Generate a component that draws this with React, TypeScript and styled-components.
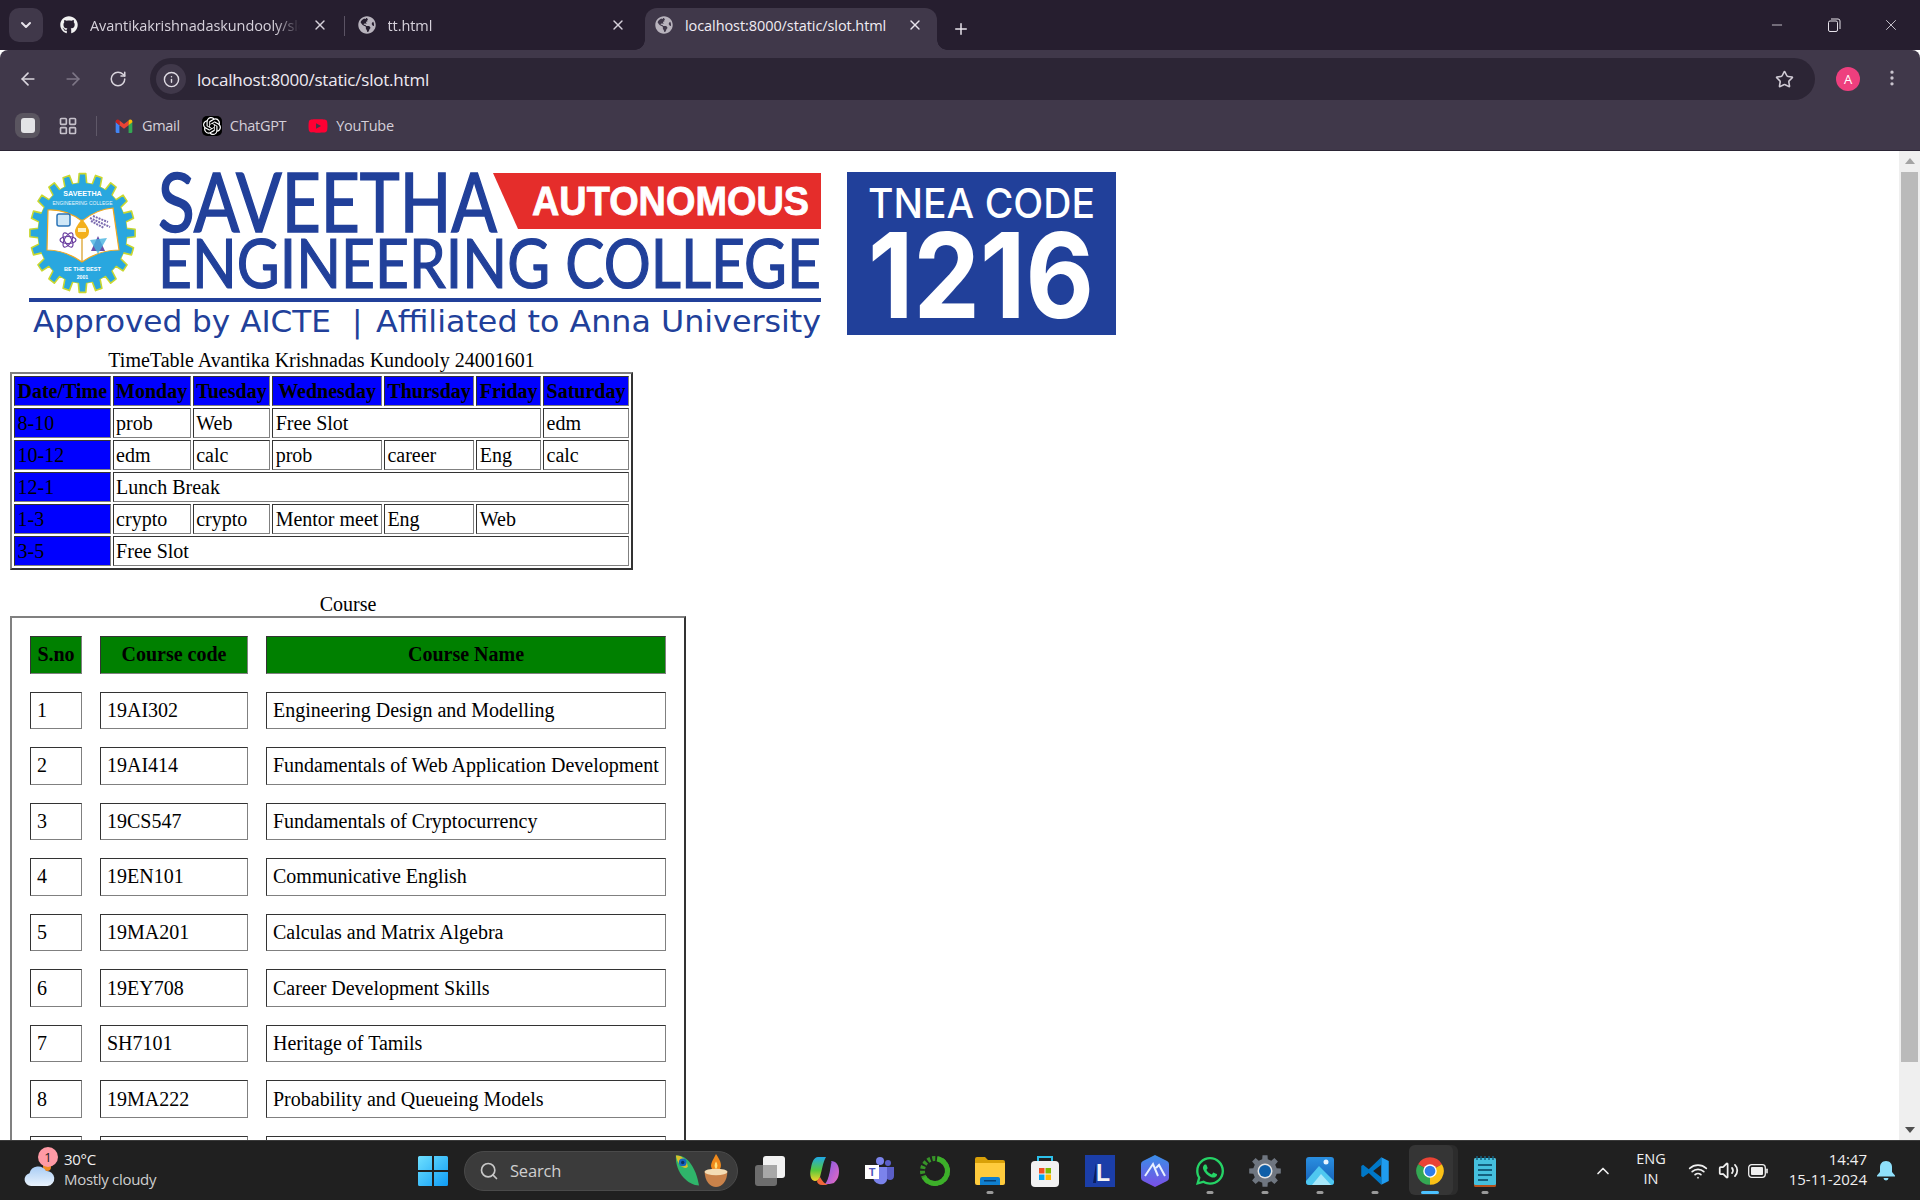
import React from "react";
import styled, {createGlobalStyle} from "styled-components";
import {ArrowLeft, ArrowRight, RotateCw, Info, Star, EllipsisVertical, Plus, X, ChevronDown, ChevronUp, Minus, LayoutGrid, Search as SearchIcon, Wifi, Volume2} from "lucide-react";
import {FaGithub, FaGlobeAmericas, FaWhatsapp, FaYoutube} from "react-icons/fa";
import {SiOpenai} from "react-icons/si";

const UI_FONT = `"Open Sans", "Noto Sans", Roboto, sans-serif`;

const GlobalStyle = createGlobalStyle`
    html, body {
        margin: 0;
        padding: 0;
        height: 1200px;
        overflow: hidden;
        background: #fff;
    }
`;

const Screen = styled.div`
    width: 1920px;
    height: 1200px;
    display: flex;
    flex-direction: column;
    overflow: hidden;
`;

/* browser chrome */
const TabStrip = styled.div`
    height: 50px;
    flex: none;
    display: flex;
    align-items: flex-end;
    padding-left: 9px;
    background: #261e2f;
    color: #e8e4ec;
    font-family: ${UI_FONT};
`;

const TabSearch = styled.div`
    width: 34px;
    height: 34px;
    margin: 0 7px 8px 0;
    border-radius: 10px;
    background: #40384a;
    display: flex;
    align-items: center;
    justify-content: center;
`;

const Tab = styled.div<{$active?: boolean; $sep?: boolean}>`
    position: relative;
    width: ${p => p.$active ? 292 : 297.5}px;
    height: 42px;
    flex: none;
    box-sizing: border-box;
    padding: 0 ${p => p.$active ? 14 : 19.5}px 8px 10px;
    display: flex;
    align-items: center;
    gap: 12px;
    border-radius: 12px 12px 0 0;
    background: ${p => p.$active ? "#40384a" : "transparent"};
    ${p => p.$sep ? `&::after {
        content: "";
        position: absolute;
        right: 3px;
        top: 8px;
        width: 1px;
        height: 20px;
        background: #5b5364;
    }` : ""}
    ${p => p.$active ? `&::before, &::after {
        content: "";
        position: absolute;
        bottom: 0;
        width: 10px;
        height: 10px;
    }
    &::before {
        left: -10px;
        background: radial-gradient(circle at 0 0, transparent 9.5px, #40384a 10px);
    }
    &::after {
        right: -10px;
        background: radial-gradient(circle at 100% 0, transparent 9.5px, #40384a 10px);
    }` : ""}
`;

const TabTitle = styled.div<{$active?: boolean}>`
    flex: 1;
    min-width: 0;
    white-space: nowrap;
    overflow: hidden;
    font-size: 14.5px;
    letter-spacing: -0.08px;
    color: ${p => p.$active ? "#f0ecf3" : "#d6d1db"};
    ${p => p.$active ? "" : "mask-image: linear-gradient(to right, #000 88%, transparent 100%);"}
`;

const TabIcon = styled.div`
    width: 18px;
    height: 18px;
    flex: none;
    display: flex;
    color: #b8b3bd;
`;

const NewTab = styled.div`
    margin: 0 0 12px 15px;
    display: flex;
`;

const WindowControls = styled.div`
    margin-left: auto;
    align-self: flex-start;
    height: 50px;
    padding-right: 1px;
    display: flex;
    align-items: center;
    color: #e6e2ea;
`;

const WindowButton = styled.div`
    width: 57px;
    display: flex;
    justify-content: center;
`;

const Toolbar = styled.div`
    height: 58px;
    flex: none;
    box-sizing: border-box;
    display: flex;
    align-items: flex-start;
    padding-top: 8px;
    background: #40384a;
    border-radius: 8px 8px 0 0;
    font-family: ${UI_FONT};
`;

const NavButton = styled.div<{$dim?: boolean}>`
    width: 45px;
    height: 42px;
    flex: none;
    display: flex;
    align-items: center;
    justify-content: center;
    color: ${p => p.$dim ? "#7d7686" : "#d9d5dd"};
`;

const NavGroup = styled.div`
    width: 150px;
    flex: none;
    box-sizing: border-box;
    padding-left: 5px;
    display: flex;
`;

const Omnibox = styled.div`
    width: 1665px;
    height: 42px;
    flex: none;
    box-sizing: border-box;
    padding: 0 21px 0 6px;
    border-radius: 21px;
    background: #2c2535;
    display: flex;
    align-items: center;
`;

const SiteInfo = styled.div`
    width: 30px;
    height: 30px;
    border-radius: 50%;
    background: #40384a;
    color: #e0dce4;
    display: flex;
    align-items: center;
    justify-content: center;
    flex: none;
`;

const Address = styled.div`
    margin-left: 11px;
    flex: 1;
    font-size: 17px;
    letter-spacing: -0.22px;
    color: #efebf2;
`;

const Avatar = styled.div`
    width: 24px;
    height: 24px;
    margin: 9px 0 0 21px;
    border-radius: 50%;
    background: #ee3f7e;
    color: #fff;
    font-size: 13px;
    display: flex;
    align-items: center;
    justify-content: center;
    flex: none;
`;

const MenuButton = styled.div`
    margin: 10px 0 0 22px;
    color: #c9c4ce;
    display: flex;
`;

const BookmarkBar = styled.div`
    height: 43px;
    flex: none;
    box-sizing: border-box;
    padding: 0 0 7px 15px;
    display: flex;
    align-items: center;
    background: #40384a;
    border-bottom: 1px solid #2b2535;
    font-family: ${UI_FONT};
`;

const GroupButton = styled.div`
    width: 25px;
    height: 25px;
    border-radius: 8px;
    background: #5a5560;
    display: flex;
    align-items: center;
    justify-content: center;
`;

const GroupSquare = styled.div`
    width: 14px;
    height: 15px;
    border-radius: 3px;
    background: #e3e3e6;
`;

const AppsButton = styled.div`
    margin-left: 18px;
    display: flex;
    color: #c6c1cb;
`;

const BarDivider = styled.div`
    width: 1px;
    height: 20px;
    margin: 0 17px 0 18px;
    background: #5f5868;
`;

const Bookmark = styled.div`
    display: flex;
    align-items: center;
    gap: 8px;
    margin-right: 22px;
    font-size: 14.5px;
    letter-spacing: -0.3px;
    color: #d5d0d9;
`;

const ChatGptMark = styled(SiOpenai)`
    box-sizing: border-box;
    width: 20px;
    height: 20px;
    padding: 1px;
    border-radius: 5px;
    background: #000;
    color: #fff;
`;

/* page */
const Viewport = styled.div`
    flex: 1;
    min-height: 0;
    display: flex;
    background: #fff;
`;

const Page = styled.div`
    flex: 1;
    min-width: 0;
    overflow: hidden;
    box-sizing: border-box;
    padding: 8px;
    font-family: "Liberation Serif", "Times New Roman", serif;
    font-size: 20px;
    color: #000;
`;

const Banner = styled.div`
    height: 190px;
    display: flex;
    align-items: flex-start;
`;

const LogoArt = styled.svg`
    width: 822px;
    height: 186px;
    flex: none;
`;

const CodeArt = styled.svg`
    width: 270px;
    height: 164px;
    margin: 13px 0 0 17px;
    flex: none;
`;

const SlotTable = styled.table`
    margin: 0 0 23px 2px;
    border-collapse: separate;
    border-spacing: 2px;
    border-width: 2px;
    border-style: solid;
    border-color: #808080 #333 #333 #808080;
`;

const SlotCell = styled.td<{$time?: boolean}>`
    padding: 2.5px;
    border-width: 1px;
    border-style: solid;
    border-color: #333 #808080 #808080 #333;
    white-space: nowrap;
    background: ${p => p.$time ? "#0000ff" : "transparent"};
`;

const SlotHead = styled.th`
    padding: 2.5px;
    border-width: 1px;
    border-style: solid;
    border-color: #333 #808080 #808080 #333;
    white-space: nowrap;
    background: #0000ff;
`;

const CourseTable = styled.table`
    margin-left: 2px;
    border-collapse: separate;
    border-spacing: 18px;
    border-width: 2px;
    border-style: solid;
    border-color: #808080 #333 #333 #808080;
`;

const CourseRow = styled.tr`
    height: 37.56px;
`;

const CourseCell = styled.td`
    padding: 6px;
    border-width: 1px;
    border-style: solid;
    border-color: #333 #808080 #808080 #333;
    white-space: nowrap;
`;

const CourseHead = styled.th<{$w: number}>`
    width: ${p => p.$w}px;
    padding: 6px;
    border-width: 1px;
    border-style: solid;
    border-color: #333 #808080 #808080 #333;
    white-space: nowrap;
    background: #008000;
`;

const Scrollbar = styled.div`
    width: 21px;
    flex: none;
    display: flex;
    flex-direction: column;
    background: #efefef;
`;

const ScrollArrow = styled.div`
    height: 20px;
    flex: none;
    display: flex;
    align-items: center;
    justify-content: center;
`;

const ScrollTrack = styled.div`
    flex: 1;
    min-height: 0;
    padding-top: 1px;
`;

const ScrollThumb = styled.div`
    height: 890px;
    margin: 0 2px;
    background: #bababa;
`;

/* taskbar */
const Taskbar = styled.div`
    height: 60px;
    flex: none;
    box-sizing: border-box;
    display: flex;
    align-items: center;
    background: #202020;
    border-top: 1px solid #3a3a3a;
    color: #f0f0f0;
    font-family: ${UI_FONT};
`;

const Weather = styled.div`
    width: 405px;
    flex: none;
    box-sizing: border-box;
    padding-left: 23px;
    display: flex;
    align-items: center;
`;

const WeatherGlyph = styled.div`
    position: relative;
    width: 41px;
    height: 50px;
    flex: none;
    box-sizing: border-box;
    padding-bottom: 7px;
    display: flex;
    align-items: flex-end;
`;

const WeatherBadge = styled.div`
    position: absolute;
    left: 15px;
    top: 1px;
    width: 20px;
    height: 20px;
    border-radius: 50%;
    background: #ff9aa5;
    color: #222;
    font-size: 13px;
    display: flex;
    align-items: center;
    justify-content: center;
`;

const WeatherText = styled.div`
    margin-bottom: 4px;
    font-size: 15px;
    line-height: 20px;
    letter-spacing: -0.3px;
`;

const WeatherSub = styled.div`
    color: #cfcfcf;
`;

const TaskSlot = styled.div<{$dot?: boolean; $current?: boolean}>`
    position: relative;
    width: 55px;
    height: 59px;
    flex: none;
    display: flex;
    align-items: center;
    justify-content: center;
    ${p => p.$current ? `&::before {
        content: "";
        position: absolute;
        left: 7px;
        top: 4px;
        width: 44px;
        height: 50px;
        border-radius: 6px;
        background: #353535;
        box-shadow: 5px 0 0 #2c2c2c;
    }` : ""}
    ${p => (p.$dot || p.$current) ? `&::after {
        content: "";
        position: absolute;
        bottom: 6px;
        left: 50%;
        transform: translateX(-50%);
        width: ${p.$current ? 18 : 7}px;
        height: 3px;
        border-radius: 2px;
        background: ${p.$current ? "#4cc2ff" : "#9a9a9a"};
    }` : ""}
    & > svg {
        position: relative;
        z-index: 1;
    }
`;

const SearchPill = styled.div`
    width: 274px;
    height: 40px;
    margin: 0 4px 0 4px;
    flex: none;
    box-sizing: border-box;
    padding: 0 8px 0 14px;
    border-radius: 20px;
    background: #3b3b3b;
    border: 1px solid #4a4a4a;
    display: flex;
    align-items: center;
    color: #c8c8c8;
`;

const SearchLabel = styled.div`
    margin-left: 11px;
    flex: 1;
    font-size: 16.5px;
    letter-spacing: -0.2px;
    color: #cfcfcf;
`;

const Tray = styled.div`
    margin-left: auto;
    padding-right: 15px;
    display: flex;
    align-items: center;
`;

const TraySlot = styled.div<{$w: number}>`
    width: ${p => p.$w}px;
    flex: none;
    display: flex;
    justify-content: center;
`;

const Lang = styled.div`
    width: 56px;
    flex: none;
    margin-bottom: 3px;
    text-align: center;
    font-size: 14.5px;
    line-height: 20px;
`;

const Clock = styled.div`
    width: 94px;
    flex: none;
    margin-bottom: 3px;
    text-align: right;
    font-size: 15px;
    line-height: 20px;
    letter-spacing: 0;
`;

/* drawings */
function gearPath(cx: number, cy: number, outer: number, inner: number, teeth: number, sx = 1) {
    let d = "";
    for (let i = 0; i < teeth; i++) {
        const step = (Math.PI * 2) / teeth;
        const a = i * step - Math.PI / 2;
        const pts: Array<[number, number]> = [
            [inner, a - step * 0.3],
            [outer, a - step * 0.2],
            [outer, a + step * 0.2],
            [inner, a + step * 0.3],
        ];
        pts.forEach(([r, t], k) => {
            const x = (cx + sx * r * Math.cos(t)).toFixed(1);
            const y = (cy + r * Math.sin(t)).toFixed(1);
            d += (i === 0 && k === 0 ? "M" : "L") + x + " " + y + " ";
        });
    }
    return d + "Z";
}

function Emblem() {
    return (
        <g>
            <path d={gearPath(82.5, 233, 59.5, 50, 20, 0.885)} fill="#29a7df" stroke="#c9d72f" strokeWidth="1.6" strokeLinejoin="round" />
            <ellipse cx="82.5" cy="233" rx="44.5" ry="50" fill="#29a7df" />
            <path d="M48 210 Q66 209 82 221 Q97 209 113 208 L119 250 Q99 250 82 262 Q65 250 47 250 Z" fill="#fff" stroke="#f3a81c" strokeWidth="1.2" />
            <rect x="57" y="214" width="13" height="12" rx="2" fill="#cfe7f7" stroke="#2b74b8" strokeWidth="1.5" />
            <path d="M90 218 L110 227 M93 216 L108 222 M91 221 L104 228" stroke="#7b6bb0" strokeWidth="2" strokeDasharray="2 1" />
            <g fill="none" stroke="#6b3fa0" strokeWidth="1.2">
                <ellipse cx="68" cy="240" rx="8" ry="3.500" transform="rotate(60 68 240)" />
                <ellipse cx="68" cy="240" rx="8" ry="3.500" transform="rotate(-60 68 240)" />
                <ellipse cx="68" cy="240" rx="8" ry="3.500" />
            </g>
            <path d="M98 236 L105 251 L91 251 Z" fill="#6b4fa8" />
            <path d="M90 240 L107 238 L98 254 Z" fill="#45b3e0" opacity=".8" />
            <line x1="82" y1="236" x2="82" y2="261" stroke="#d99a1a" strokeWidth="1.2" />
            <path d="M82 219 Q90 229 89 232 A7 7 0 0 1 75 232 Q74 229 82 219Z" fill="#f3b01c" />
            <rect x="78" y="228" width="8" height="4" fill="#fff3c4" />
            <text x="82.5" y="196" textAnchor="middle" fontFamily="Liberation Sans, sans-serif" fontWeight="700" fontSize="7.2" fill="#fff">SAVEETHA</text>
            <text x="82.5" y="205" textAnchor="middle" fontFamily="Liberation Sans, sans-serif" fontSize="6" fill="#e8f6fc" textLength="60" lengthAdjust="spacingAndGlyphs">ENGINEERING COLLEGE</text>
            <text x="82.5" y="271" textAnchor="middle" fontFamily="Liberation Sans, sans-serif" fontWeight="700" fontSize="5.6" fill="#fff">BE THE BEST</text>
            <text x="82.5" y="279" textAnchor="middle" fontFamily="Liberation Sans, sans-serif" fontWeight="700" fontSize="5.2" fill="#fff">2001</text>
        </g>
    );
}

function Logo() {
    return (
        <LogoArt viewBox="8 159 822 186">
            <Emblem />
            <text x="158" y="232" fontFamily="Lato, sans-serif" fontSize="81" fill="#21409a" stroke="#21409a" strokeWidth="1.6" textLength="339" lengthAdjust="spacingAndGlyphs">SAVEETHA</text>
            <path d="M493 173 H821 V229 H518 Z" fill="#e52d2b" />
            <text x="532" y="215" fontFamily="Liberation Sans, sans-serif" fontWeight="700" fontSize="40" fill="#fff" stroke="#fff" strokeWidth=".8" textLength="277" lengthAdjust="spacingAndGlyphs">AUTONOMOUS</text>
            <text x="158" y="288" fontFamily="Lato, sans-serif" fontSize="67" fill="#21409a" stroke="#21409a" strokeWidth="1.2" textLength="663" lengthAdjust="spacingAndGlyphs">ENGINEERING COLLEGE</text>
            <rect x="29" y="298" width="792" height="4" fill="#21409a" />
            <text x="33" y="332" fontFamily="DejaVu Sans, sans-serif" fontSize="31" fill="#21409a" textLength="298" lengthAdjust="spacingAndGlyphs">Approved by AICTE</text>
            <text x="352" y="332" fontFamily="DejaVu Sans, sans-serif" fontSize="31" fill="#21409a">|</text>
            <text x="376" y="332" fontFamily="DejaVu Sans, sans-serif" fontSize="31" fill="#21409a" textLength="445" lengthAdjust="spacingAndGlyphs">Affiliated to Anna University</text>
        </LogoArt>
    );
}

function TneaCode() {
    return (
        <CodeArt viewBox="847 172 270 164">
            <rect x="847" y="172" width="269" height="163" fill="#21409a" />
            <text x="868" y="218" fontFamily="Inter, sans-serif" fontWeight="500" fontSize="41" fill="#fff" textLength="227" lengthAdjust="spacingAndGlyphs">TNEA CODE</text>
            <text x="868" y="318" fontFamily="Inter, sans-serif" fontWeight="700" fontSize="118" fill="#fff" textLength="226" lengthAdjust="spacingAndGlyphs">1216</text>
        </CodeArt>
    );
}

function GmailIcon() {
    return (
        <svg width="20" height="20" viewBox="0 0 24 24">
            <path d="M2 6.5V19a1.5 1.5 0 0 0 1.500 1.500H6.500V11z" fill="#4285f4" />
            <path d="M22 6.500V19a1.500 1.500 0 0 1-1.500 1.500H17.500V11z" fill="#34a853" />
            <path d="M6.500 11V5.500L12 9.700l5.500-4.200V11L12 15.200z" fill="#ea4335" />
            <path d="M2 6.500C2 4.500 4.300 3.500 5.800 4.700L6.500 5.500V11L2 7.500z" fill="#c5221f" />
            <path d="M22 6.500C22 4.500 19.700 3.500 18.200 4.700L17.500 5.500V11L22 7.500z" fill="#fbbc04" />
        </svg>
    );
}

function CloudIcon() {
    return (
        <svg width="32" height="30" viewBox="0 0 32 30">
            <defs>
                <linearGradient id="cloudFill" x1="0" y1="0" x2="0" y2="1">
                    <stop offset="0" stopColor="#a9cdf5" />
                    <stop offset="1" stopColor="#e9f2fc" />
                </linearGradient>
            </defs>
            <circle cx="24" cy="8" r="4" fill="#f08a24" />
            <path d="M8 27a6.500 6.500 0 0 1-1.500-12.800A9 9 0 0 1 23 12a7.500 7.500 0 0 1 1.500 15z" fill="url(#cloudFill)" />
        </svg>
    );
}

function WindowsIcon() {
    return (
        <svg width="30" height="30" viewBox="0 0 30 30">
            <defs>
                <linearGradient id="winFill" x1="0" y1="0" x2="1" y2="1">
                    <stop offset="0" stopColor="#6ee0ff" />
                    <stop offset="1" stopColor="#0f9cf5" />
                </linearGradient>
            </defs>
            <path d="M0 1.500A1.500 1.500 0 0 1 1.500 0H14V14H0zM16 0H28.500A1.500 1.500 0 0 1 30 1.500V14H16zM0 16H14V30H1.500A1.500 1.500 0 0 1 0 28.500zM16 16H30V28.500A1.500 1.500 0 0 1 28.500 30H16z" fill="url(#winFill)" />
        </svg>
    );
}

function FeatherIcon() {
    return (
        <svg width="32" height="36" viewBox="0 0 32 42">
            <path d="M3 3C14 1 26 14 30 38C18 38 2 24 3 3Z" fill="#2fb56a" />
            <path d="M3 3C9 2 16 8 17 16C13 20 5 15 3 3Z" fill="#d9c02a" />
            <circle cx="11" cy="11" r="4.500" fill="#1664c0" />
            <circle cx="11" cy="11" r="2" fill="#0b2f66" />
        </svg>
    );
}

function DiyaIcon() {
    return (
        <svg width="26" height="36" viewBox="0 0 26 38">
            <path d="M13 1C17 7 19 11 18 15C17 20 9 20 8 15C7 11 10 7 13 1Z" fill="#f08a1c" />
            <path d="M13 9C15 12 15 15 13 17C11 15 11 12 13 9Z" fill="#ffe27a" />
            <path d="M1 19H25C25 30 19 36 13 36C7 36 1 30 1 19Z" fill="#c9824a" />
            <ellipse cx="13" cy="20" rx="12" ry="3.500" fill="#f4dcb4" />
        </svg>
    );
}

function TaskViewIcon() {
    return (
        <svg width="30" height="30" viewBox="0 0 30 30">
            <rect x="0" y="9" width="22" height="21" rx="3" fill="#6d6d6d" />
            <rect x="8" y="0" width="22" height="22" rx="3" fill="#f2f2f2" />
            <rect x="8" y="9" width="14" height="13" fill="#a8a8a8" />
        </svg>
    );
}

function CopilotIcon() {
    return (
        <svg width="30" height="30" viewBox="0 0 30 30">
            <defs>
                <linearGradient id="copA" x1="0" y1="0" x2="0" y2="1">
                    <stop offset="0" stopColor="#1fa8e6" />
                    <stop offset=".55" stopColor="#57c83c" />
                    <stop offset="1" stopColor="#f6d32b" />
                </linearGradient>
                <linearGradient id="copB" x1="0" y1="0" x2="1" y2="1">
                    <stop offset="0" stopColor="#7c5ae8" />
                    <stop offset="1" stopColor="#ea6ac0" />
                </linearGradient>
            </defs>
            <path d="M8 1H16C13 6 12 14 10 21C9 24 7 25 5 25C1 25-1 19 1 12C2 6 4 1 8 1Z" fill="url(#copA)" />
            <path d="M21 5C26 5 29 9 29 15C29 21 27 24 24 27C22 28 17 28 15 28C19 24 21 10 21 5Z" fill="url(#copB)" />
            <path d="M10 21C12 25 15 28 18 29H12C9 29 7 27 7 25Z" fill="#f0663a" />
            <path d="M14 7C17 4 20 4 22 6C20 10 19 18 18 21H12C13 16 13 11 14 7Z" fill="#202020" opacity=".55" />
        </svg>
    );
}

function TeamsIcon() {
    return (
        <svg width="30" height="28" viewBox="0 0 30 28">
            <circle cx="23" cy="6" r="3" fill="#5b5fc7" />
            <circle cx="15" cy="4" r="4" fill="#7b83eb" />
            <path d="M20 10H29V19C29 23 25 24 22 22Z" fill="#5b5fc7" />
            <path d="M8 10H22V22C22 26 18 28 14 27C10 26 8 23 8 19Z" fill="#7b83eb" />
            <rect x="0" y="8" width="14" height="14" fill="#fff" />
            <text x="7" y="19" textAnchor="middle" fontFamily="Liberation Sans, sans-serif" fontWeight="700" fontSize="11" fill="#4b53bc">T</text>
        </svg>
    );
}

function RingIcon() {
    return (
        <svg width="32" height="32" viewBox="0 0 32 32">
            <circle cx="16" cy="16" r="12.500" fill="none" stroke="#3db02a" strokeWidth="5" strokeDasharray="50 30" transform="rotate(-80 16 16)" />
            <circle cx="16" cy="16" r="12.500" fill="none" stroke="#3db02a" strokeWidth="5" strokeDasharray="3 2" strokeDashoffset="0" transform="rotate(100 16 16)" pathLength="80" opacity=".8" />
        </svg>
    );
}

function FolderIcon() {
    return (
        <svg width="30" height="28" viewBox="0 0 30 28">
            <path d="M0 2A2 2 0 0 1 2 0H10L13 3H28A2 2 0 0 1 30 5V10H0Z" fill="#d9a008" />
            <path d="M0 6H30V26A2 2 0 0 1 28 28H2A2 2 0 0 1 0 26Z" fill="#ffcb3d" />
            <path d="M5 22A2 2 0 0 1 7 20H23A2 2 0 0 1 25 22V28H5Z" fill="#0f7fd0" />
            <rect x="9" y="23" width="12" height="1.500" fill="#063f73" />
        </svg>
    );
}

function StoreIcon() {
    return (
        <svg width="30" height="32" viewBox="0 0 30 32">
            <path d="M8 7V2H22V7" fill="none" stroke="#2cc0ea" strokeWidth="2" />
            <rect x="1" y="6" width="28" height="26" rx="4" fill="#f2f2f2" />
            <rect x="9" y="13" width="5.500" height="5.500" fill="#f25022" />
            <rect x="15.500" y="13" width="5.500" height="5.500" fill="#7fba00" />
            <rect x="9" y="19.500" width="5.500" height="5.500" fill="#00a4ef" />
            <rect x="15.500" y="19.500" width="5.500" height="5.500" fill="#ffb900" />
        </svg>
    );
}

function LetterIcon() {
    return (
        <svg width="30" height="32" viewBox="0 0 30 32">
            <rect width="30" height="32" fill="#1b3ea8" />
            <path d="M11 8L8 28H11Z" fill="#0b1f5c" />
            <text x="11" y="26" fontFamily="Liberation Sans, sans-serif" fontWeight="700" fontSize="23" fill="#f4f4f4">L</text>
        </svg>
    );
}

function HexIcon() {
    return (
        <svg width="28" height="32" viewBox="0 0 28 32">
            <defs>
                <linearGradient id="hexFill" x1="0" y1="0" x2="0" y2="1">
                    <stop offset="0" stopColor="#3a8ee8" />
                    <stop offset="1" stopColor="#7a4fe6" />
                </linearGradient>
            </defs>
            <path d="M14 0L26 6Q28 7 28 9V23Q28 25 26 26L14 32L2 26Q0 25 0 23V9Q0 7 2 6Z" fill="url(#hexFill)" />
            <path d="M4 21L12 9L17 21M15 13L18 10L24 21" fill="none" stroke="#e8f0ff" strokeWidth="2" />
        </svg>
    );
}

function SettingsIcon() {
    return (
        <svg width="32" height="32" viewBox="0 0 32 32">
            <path d={gearPath(16, 16, 16, 12, 8)} fill="#6f7680" />
            <circle cx="16" cy="16" r="9.500" fill="#6f7680" />
            <circle cx="16" cy="16" r="7.500" fill="#e4e4e4" />
            <circle cx="16" cy="16" r="6" fill="#0f5fa8" />
        </svg>
    );
}

function PhotosIcon() {
    return (
        <svg width="28" height="28" viewBox="0 0 28 28">
            <defs>
                <linearGradient id="photoFill" x1="0" y1="0" x2="0" y2="1">
                    <stop offset="0" stopColor="#2a8fe0" />
                    <stop offset="1" stopColor="#1560b8" />
                </linearGradient>
            </defs>
            <rect width="28" height="28" rx="3" fill="url(#photoFill)" />
            <circle cx="20" cy="5" r="2.500" fill="#e8f4ff" />
            <path d="M0 24L13 9L28 24V25A3 3 0 0 1 25 28H3A3 3 0 0 1 0 25Z" fill="#4fc8f0" />
            <path d="M6 28L15 17L25 28Z" fill="#a8e8fa" />
        </svg>
    );
}

function CodeIcon() {
    return (
        <svg width="30" height="30" viewBox="0 0 24 24">
            <path d="M17 1L23 4V20L17 23Z" fill="#1f9cf0" />
            <path d="M17 1L7 10.500L2.500 7L1 8V16L2.500 17L7 13.500L17 23V17L10.500 12L17 7Z" fill="#0078c8" />
        </svg>
    );
}

function ChromeIcon() {
    return (
        <svg width="30" height="30" viewBox="0 0 24 24">
            <path d="M12 12L2.470 6.500A11 11 0 0 1 21.530 6.500Z" fill="#ea4335" />
            <path d="M12 12L21.530 6.500A11 11 0 0 1 12 23Z" fill="#fbc116" />
            <path d="M12 12L12 23A11 11 0 0 1 2.470 6.500Z" fill="#34a853" />
            <circle cx="12" cy="12" r="5.400" fill="#fff" />
            <circle cx="12" cy="12" r="4.300" fill="#2f7de9" />
        </svg>
    );
}

function NotepadIcon() {
    return (
        <svg width="24" height="32" viewBox="0 0 24 32">
            <rect x="1" y="3" width="22" height="29" rx="1.500" fill="#b5511c" />
            <rect x="1" y="3" width="22" height="27" rx="1.500" fill="#45c0de" />
            <path d="M5 10H19M5 15H19M5 20H19M5 25H15" stroke="#14607f" strokeWidth="2" />
            <path d="M4 1V5M8 1V5M12 1V5M16 1V5M20 1V5" stroke="#14607f" strokeWidth="1.500" />
        </svg>
    );
}

function BatteryIcon() {
    return (
        <svg width="20" height="14" viewBox="0 0 20 14">
            <rect x=".7" y=".7" width="16.600" height="12.600" rx="3" fill="none" stroke="#f0f0f0" strokeWidth="1.300" />
            <rect x="3" y="3" width="12" height="8" rx="1" fill="#f0f0f0" />
            <rect x="18.200" y="4.500" width="1.600" height="5" rx=".8" fill="#f0f0f0" />
        </svg>
    );
}

function BellIcon() {
    return (
        <svg width="18" height="20" viewBox="0 0 18 20">
            <path d="M9 0C5 0 3 3 3 6V11L0 14.500V15.500H18V14.500L15 11V6C15 3 13 0 9 0Z" fill="#8fe0fb" />
            <path d="M6.500 17H11.500A2.500 2.500 0 0 1 6.500 17Z" fill="#8fe0fb" />
        </svg>
    );
}

function RestoreIcon() {
    return (
        <svg width="14" height="14" viewBox="0 0 14 14" fill="none" stroke="currentColor" strokeWidth="1">
            <rect x="1.500" y="3" width="9" height="10.500" rx="1.500" />
            <path d="M4 1H11A2 2 0 0 1 13 3V11" />
        </svg>
    );
}

const DAYS = ["Date/Time", "Monday", "Tuesday", "Wednesday", "Thursday", "Friday", "Saturday"];

const SLOTS: Array<{time: string; cells: Array<[string, number]>}> = [
    {time: "8-10", cells: [["prob", 1], ["Web", 1], ["Free Slot", 3], ["edm", 1]]},
    {time: "10-12", cells: [["edm", 1], ["calc", 1], ["prob", 1], ["career", 1], ["Eng", 1], ["calc", 1]]},
    {time: "12-1", cells: [["Lunch Break", 6]]},
    {time: "1-3", cells: [["crypto", 1], ["crypto", 1], ["Mentor meet", 1], ["Eng", 1], ["Web", 2]]},
    {time: "3-5", cells: [["Free Slot", 6]]},
];

const COURSES = [
    ["1", "19AI302", "Engineering Design and Modelling"],
    ["2", "19AI414", "Fundamentals of Web Application Development"],
    ["3", "19CS547", "Fundamentals of Cryptocurrency"],
    ["4", "19EN101", "Communicative English"],
    ["5", "19MA201", "Calculas and Matrix Algebra"],
    ["6", "19EY708", "Career Development Skills"],
    ["7", "SH7101", "Heritage of Tamils"],
    ["8", "19MA222", "Probability and Queueing Models"],
    ["\u00a0", "", ""],
];

export default function App() {
    return (
        <Screen>
            <GlobalStyle />
            <TabStrip>
                <TabSearch><ChevronDown size={16} strokeWidth={3} color="#e8e4ec" /></TabSearch>
                <Tab $sep>
                    <TabIcon><FaGithub size={18} color="#f2f2f2" /></TabIcon>
                    <TabTitle>Avantikakrishnadaskundooly/slot</TabTitle>
                    <X size={16} color="#d6d1db" />
                </Tab>
                <Tab>
                    <TabIcon><FaGlobeAmericas size={18} /></TabIcon>
                    <TabTitle>tt.html</TabTitle>
                    <X size={16} color="#d6d1db" />
                </Tab>
                <Tab $active>
                    <TabIcon><FaGlobeAmericas size={18} /></TabIcon>
                    <TabTitle $active>localhost:8000/static/slot.html</TabTitle>
                    <X size={16} color="#e8e4ec" />
                </Tab>
                <NewTab><Plus size={18} color="#e8e4ec" /></NewTab>
                <WindowControls>
                    <WindowButton><Minus size={16} strokeWidth={1.2} /></WindowButton>
                    <WindowButton><RestoreIcon /></WindowButton>
                    <WindowButton><X size={18} strokeWidth={1.1} /></WindowButton>
                </WindowControls>
            </TabStrip>
            <Toolbar>
                <NavGroup>
                    <NavButton><ArrowLeft size={20} /></NavButton>
                    <NavButton $dim><ArrowRight size={20} /></NavButton>
                    <NavButton><RotateCw size={18} /></NavButton>
                </NavGroup>
                <Omnibox>
                    <SiteInfo><Info size={17} /></SiteInfo>
                    <Address>localhost:8000/static/slot.html</Address>
                    <Star size={19} color="#d0cbd5" />
                </Omnibox>
                <Avatar>A</Avatar>
                <MenuButton><EllipsisVertical size={20} /></MenuButton>
            </Toolbar>
            <BookmarkBar>
                <GroupButton><GroupSquare /></GroupButton>
                <AppsButton><LayoutGrid size={20} /></AppsButton>
                <BarDivider />
                <Bookmark><GmailIcon />Gmail</Bookmark>
                <Bookmark><ChatGptMark />ChatGPT</Bookmark>
                <Bookmark><FaYoutube size={20} color="#ff0033" />YouTube</Bookmark>
            </BookmarkBar>
            <Viewport>
                <Page>
                    <Banner>
                        <Logo />
                        <TneaCode />
                    </Banner>
                    <SlotTable>
                        <caption>TimeTable Avantika Krishnadas Kundooly 24001601</caption>
                        <tbody>
                            <tr>{DAYS.map(day => <SlotHead key={day}>{day}</SlotHead>)}</tr>
                            {SLOTS.map(row => (
                                <tr key={row.time}>
                                    <SlotCell $time>{row.time}</SlotCell>
                                    {row.cells.map(([label, span], i) => (
                                        <SlotCell key={i} colSpan={span}>{label}</SlotCell>
                                    ))}
                                </tr>
                            ))}
                        </tbody>
                    </SlotTable>
                    <CourseTable>
                        <caption>Course</caption>
                        <tbody>
                            <CourseRow>
                                <CourseHead $w={38}>S.no</CourseHead>
                                <CourseHead $w={134}>Course code</CourseHead>
                                <CourseHead $w={386}>Course Name</CourseHead>
                            </CourseRow>
                            {COURSES.map((row, i) => (
                                <CourseRow key={i}>
                                    {row.map((text, k) => <CourseCell key={k}>{text}</CourseCell>)}
                                </CourseRow>
                            ))}
                        </tbody>
                    </CourseTable>
                </Page>
                <Scrollbar>
                    <ScrollArrow>
                        <svg width="10" height="6" viewBox="0 0 10 6"><path d="M5 0L10 6H0Z" fill="#a3a3a3" /></svg>
                    </ScrollArrow>
                    <ScrollTrack><ScrollThumb /></ScrollTrack>
                    <ScrollArrow>
                        <svg width="10" height="6" viewBox="0 0 10 6"><path d="M5 6L10 0H0Z" fill="#505050" /></svg>
                    </ScrollArrow>
                </Scrollbar>
            </Viewport>
            <Taskbar>
                <Weather>
                    <WeatherGlyph>
                        <CloudIcon />
                        <WeatherBadge>1</WeatherBadge>
                    </WeatherGlyph>
                    <WeatherText>
                        30°C
                        <WeatherSub>Mostly cloudy</WeatherSub>
                    </WeatherText>
                </Weather>
                <TaskSlot><WindowsIcon /></TaskSlot>
                <SearchPill>
                    <SearchIcon size={20} />
                    <SearchLabel>Search</SearchLabel>
                    <FeatherIcon />
                    <DiyaIcon />
                </SearchPill>
                <TaskSlot><TaskViewIcon /></TaskSlot>
                <TaskSlot><CopilotIcon /></TaskSlot>
                <TaskSlot><TeamsIcon /></TaskSlot>
                <TaskSlot><RingIcon /></TaskSlot>
                <TaskSlot $dot><FolderIcon /></TaskSlot>
                <TaskSlot><StoreIcon /></TaskSlot>
                <TaskSlot><LetterIcon /></TaskSlot>
                <TaskSlot><HexIcon /></TaskSlot>
                <TaskSlot $dot><FaWhatsapp size={32} color="#25d366" /></TaskSlot>
                <TaskSlot $dot><SettingsIcon /></TaskSlot>
                <TaskSlot $dot><PhotosIcon /></TaskSlot>
                <TaskSlot $dot><CodeIcon /></TaskSlot>
                <TaskSlot $current><ChromeIcon /></TaskSlot>
                <TaskSlot $dot><NotepadIcon /></TaskSlot>
                <Tray>
                    <TraySlot $w={40}><ChevronUp size={20} /></TraySlot>
                    <Lang>ENG<br />IN</Lang>
                    <TraySlot $w={4} />
                    <TraySlot $w={30}><Wifi size={20} /></TraySlot>
                    <TraySlot $w={30}><Volume2 size={21} /></TraySlot>
                    <TraySlot $w={30}><BatteryIcon /></TraySlot>
                    <Clock>14:47<br />15-11-2024</Clock>
                    <TraySlot $w={38}><BellIcon /></TraySlot>
                </Tray>
            </Taskbar>
        </Screen>
    );
}
